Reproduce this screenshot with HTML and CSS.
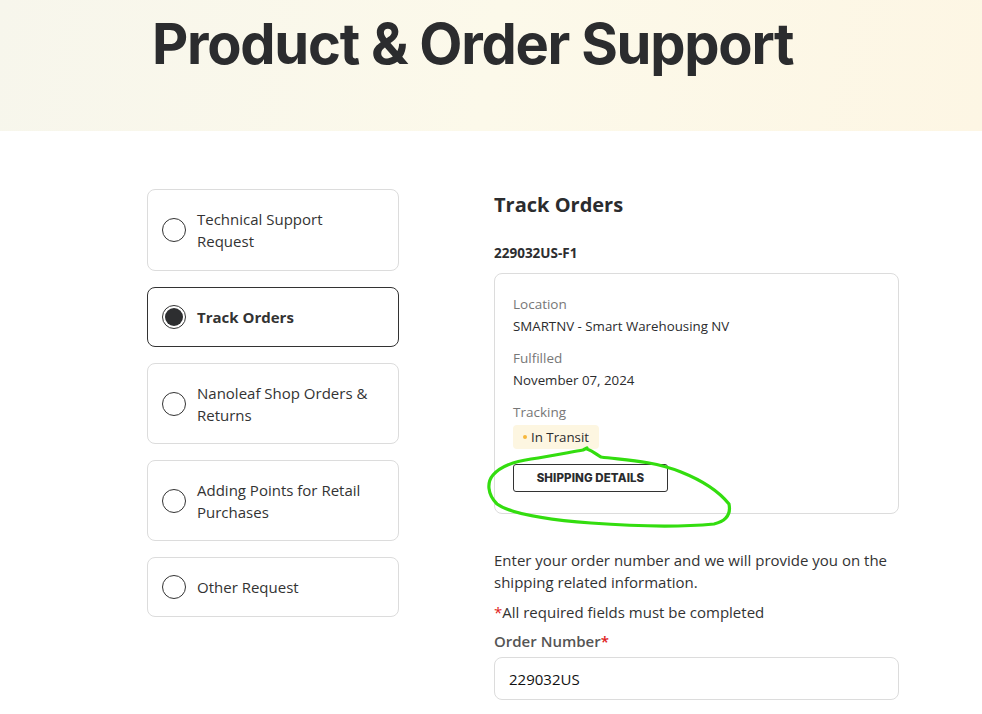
FILE: index.html
```html
<!DOCTYPE html>
<html lang="en">
<head>
<meta charset="utf-8">
<title>Product &amp; Order Support</title>
<link rel="stylesheet" href="styles.css">
</head>
<body>
<header class="hero">
  <h1 class="hero-title">Product &amp; Order Support</h1>
</header>
<main class="content">
  <nav class="options">
    <label class="option option-tall"><span class="radio"></span><span class="option-text">Technical Support Request</span></label>
    <label class="option option-selected"><span class="radio radio-on"></span><span class="option-text">Track Orders</span></label>
    <label class="option option-tall"><span class="radio"></span><span class="option-text">Nanoleaf Shop Orders &amp; Returns</span></label>
    <label class="option option-tall"><span class="radio"></span><span class="option-text">Adding Points for Retail Purchases</span></label>
    <label class="option"><span class="radio"></span><span class="option-text">Other Request</span></label>
  </nav>
  <section class="panel">
    <h2 class="panel-title">Track Orders</h2>
    <h3 class="order-id">229032US-F1</h3>
    <div class="order-card">
      <div class="field">
        <div class="field-label">Location</div>
        <div class="field-value">SMARTNV - Smart Warehousing NV</div>
      </div>
      <div class="field">
        <div class="field-label">Fulfilled</div>
        <div class="field-value">November 07, 2024</div>
      </div>
      <div class="field">
        <div class="field-label">Tracking</div>
        <span class="badge"><span class="badge-dot"></span>In Transit</span>
      </div>
      <button class="ship-btn">SHIPPING DETAILS</button>
      <svg class="scribble" width="260" height="90" viewBox="0 0 260 90" fill="none">
        <path d="M106 7 C112 9 116 13 120 15 C140 18 170 18 200 30 C225 40 240 52 248 62 C250 72 246 79 233 82 C200 85 150 84 110 81 C70 78 30 72 16 62 C6 52 6 40 12 33 C20 24 32 20 50 17 C70 14 90 10 102 8 L106 6" stroke="#33dd0f" stroke-width="3.2" stroke-linecap="round" stroke-linejoin="round"/>
      </svg>
    </div>
    <p class="intro">Enter your order number and we will provide you on the shipping related information.</p>
    <p class="required"><span class="star">*</span>All required fields must be completed</p>
    <label class="input-label">Order Number<span class="star">*</span></label>
    <div class="input">229032US</div>
  </section>
</main>
</body>
</html>
```
FILE: styles.css
```css
* { box-sizing: border-box; }
html, body { margin: 0; padding: 0; }
body {
  font-family: "Open Sans", "Noto Sans", sans-serif;
  color: #2d2e30;
  background: #fff;
  width: 982px;
  overflow: hidden;
}
.hero {
  height: 131px;
  background: linear-gradient(100deg, #f7f6ec 0%, #fcf9ea 50%, #fdf6e4 100%);
  padding-left: 152px;
}
.hero-title {
  margin: 0;
  padding-top: 8px;
  font-family: "Inter", sans-serif;
  font-weight: 700;
  font-size: 56px;
  line-height: 72px;
  letter-spacing: -1.25px;
  color: #2b2c2e;
}
.content {
  display: flex;
  padding: 58px 0 0 147px;
  gap: 95px;
}
.options {
  width: 252px;
  display: flex;
  flex-direction: column;
  gap: 16px;
}
.option {
  display: flex;
  align-items: center;
  gap: 11px;
  padding: 0 14px;
  height: 60px;
  border: 1px solid #dcdcdc;
  border-radius: 8px;
  font-size: 15px;
  line-height: 22px;
  color: #333;
}
.option-tall { height: 81px; }
.option:first-child { height: 82px; }
.option-selected { border-color: #333; }
.option-selected .option-text { font-weight: 700; }
.option-text { padding-right: 6px; }
.radio {
  flex: 0 0 24px;
  width: 24px;
  height: 24px;
  border: 1.5px solid #333;
  border-radius: 50%;
  position: relative;
}
.radio-on::after {
  content: "";
  position: absolute;
  inset: 2px;
  border-radius: 50%;
  background: #2d2e30;
}
.panel {
  width: 405px;
}
.panel-title {
  margin: 3px 0 0;
  font-size: 20px;
  line-height: 26px;
  font-weight: 700;
  color: #2b2c2e;
}
.order-id {
  margin: 25px 0 0;
  font-size: 13.5px;
  line-height: 20px;
  font-weight: 700;
}
.order-card {
  position: relative;
  margin-top: 10px;
  border: 1px solid #dcdcdc;
  border-radius: 8px;
  padding: 20px 18px 21px;
  height: 241px;
}
.field { margin-bottom: 12px; }
.field-label {
  font-size: 13.5px;
  line-height: 20px;
  color: #777;
}
.field-value {
  margin-top: 2px;
  font-size: 13.3px;
  line-height: 20px;
  color: #2b2c2e;
}
.badge {
  display: inline-flex;
  align-items: center;
  gap: 4px;
  margin-top: 3px;
  padding: 0 10px;
  height: 24px;
  background: #fdf6e1;
  border-radius: 4px;
  font-size: 13.3px;
  color: #2b2c2e;
}
.badge-dot {
  width: 4px;
  height: 4px;
  border-radius: 50%;
  background: #f6b73c;
}
.ship-btn {
  display: block;
  margin-top: 15px;
  width: 155px;
  height: 28px;
  background: #fff;
  border: 1px solid #333;
  border-radius: 3px;
  font-family: "Inter", sans-serif;
  font-size: 11.5px;
  font-weight: 800;
  color: #2b2c2e;
  letter-spacing: 0.1px;
}
.scribble {
  position: absolute;
  left: -14px;
  top: 168px;
  pointer-events: none;
}
.intro {
  margin: 35px 0 0;
  font-size: 15px;
  line-height: 22px;
  color: #333;
}
.required {
  margin: 8px 0 0;
  font-size: 15px;
  line-height: 22px;
  color: #333;
}
.star { color: #e02020; }
.input-label {
  display: block;
  margin-top: 7px;
  font-size: 15px;
  line-height: 22px;
  font-weight: 600;
  color: #555;
}
.input {
  margin-top: 5px;
  height: 43px;
  border: 1px solid #dcdcdc;
  border-radius: 8px;
  padding: 0 14px;
  display: flex;
  align-items: center;
  font-size: 15px;
  color: #111;
}
```
